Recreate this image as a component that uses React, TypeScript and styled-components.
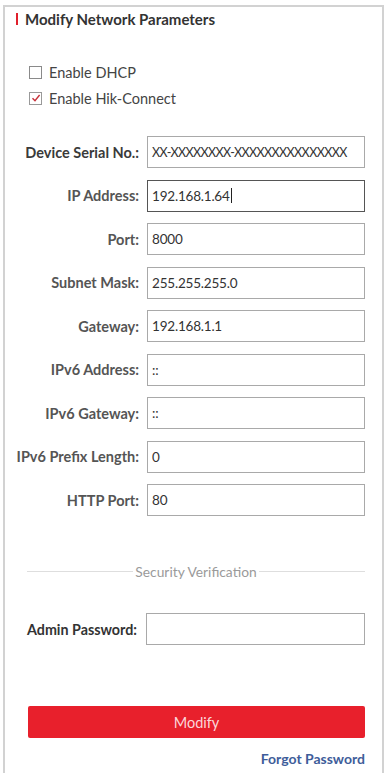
import styled, { createGlobalStyle } from "styled-components";

const GlobalStyle = createGlobalStyle`
  html, body {
    margin: 0;
    padding: 0;
    background: #ffffff;
    font-family: Lato, "Open Sans", "Liberation Sans", sans-serif;
  }
`;

type Row = { label: string; value: string; strong?: boolean; focused?: boolean; tight?: boolean };

const rows: Row[] = [
  { label: "Device Serial No.:", value: "XX-XXXXXXXX-XXXXXXXXXXXXXXX", strong: true, tight: true },
  { label: "IP Address:", value: "192.168.1.64", focused: true },
  { label: "Port:", value: "8000" },
  { label: "Subnet Mask:", value: "255.255.255.0" },
  { label: "Gateway:", value: "192.168.1.1" },
  { label: "IPv6 Address:", value: "::" },
  { label: "IPv6 Gateway:", value: "::" },
  { label: "IPv6 Prefix Length:", value: "0" },
  { label: "HTTP Port:", value: "80" },
];

const App = () => {
  return (
    <>
      <GlobalStyle />
      <Frame>
        <Title>Modify Network Parameters</Title>

        <Checks>
          <CheckRow>
            <Box />
            <span>Enable DHCP</span>
          </CheckRow>
          <CheckRow>
            <Box checked>
              <svg width="10" height="10" viewBox="0 0 10 10">
                <path d="M1.5 5.2 L4 7.8 L8.6 2" fill="none" stroke="#c8303a" strokeWidth="1.4" />
              </svg>
            </Box>
            <span>Enable Hik-Connect</span>
          </CheckRow>
        </Checks>

        <Form>
          {rows.map((r) => (
            <FieldRow key={r.label}>
              <Label strong={r.strong}>{r.label}</Label>
              <Field focused={r.focused}>
                <Value tight={r.tight}>{r.value}</Value>
                {r.focused && <Caret />}
              </Field>
            </FieldRow>
          ))}
        </Form>

        <Divider>
          <span>Security Verification</span>
        </Divider>

        <AdminRow>
          <AdminLabel>Admin Password:</AdminLabel>
          <Field />
        </AdminRow>

        <Actions>
          <ModifyButton>Modify</ModifyButton>
          <Forgot>Forgot Password</Forgot>
        </Actions>
      </Frame>
    </>
  );
};

const Frame = styled.div`
  margin: 5px 3px 0 3px;
  border: 2px solid #d2d2d2;
  border-bottom: none;
  height: 780px;
  box-sizing: border-box;
  padding: 0 17px 0 0;
`;

const Title = styled.div`
  display: flex;
  align-items: center;
  gap: 7px;
  margin: 4px 0 0 11px;
  height: 16px;
  font-size: 15px;
  font-weight: 700;
  color: #333;

  &::before {
    content: "";
    width: 2px;
    height: 12px;
    background: #e0202c;
  }
`;

const Checks = styled.div`
  display: flex;
  flex-direction: column;
  gap: 10px;
  margin: 37px 0 0 24px;
`;

const CheckRow = styled.div`
  display: flex;
  align-items: center;
  gap: 7px;
  height: 16px;
  font-size: 14.5px;
  color: #444;
`;

const Box = styled.div<{ checked?: boolean }>`
  width: 11px;
  height: 11px;
  border: 1px solid ${(p) => (p.checked ? "#999" : "#8a8a8a")};
  display: flex;
  align-items: center;
  justify-content: center;
`;

const Form = styled.div`
  display: flex;
  flex-direction: column;
  gap: 11.5px;
  margin-top: 30px;
`;

const FieldRow = styled.div`
  display: grid;
  grid-template-columns: 134px 1fr;
  column-gap: 8px;
  align-items: center;
`;

const Label = styled.div<{ strong?: boolean }>`
  text-align: right;
  font-size: 14.5px;
  font-weight: 700;
  color: ${(p) => (p.strong ? "#3a3a3a" : "#555")};
  white-space: nowrap;
`;

const Field = styled.div<{ focused?: boolean }>`
  height: 32px;
  box-sizing: border-box;
  border: 1px solid ${(p) => (p.focused ? "#555" : "#a9a9a9")};
  padding: 0 4px;
  display: flex;
  align-items: center;
  font-size: 13.5px;
  color: #333;
  overflow: hidden;
  white-space: nowrap;
`;

const Value = styled.span<{ tight?: boolean }>`
  font-size: ${(p) => (p.tight ? "12.5px" : "inherit")};
  letter-spacing: ${(p) => (p.tight ? "-0.6px" : "-0.2px")};
`;

const Caret = styled.span`
  flex: none;
  width: 1px;
  height: 15px;
  background: #222;
  margin-left: 1px;
`;

const Divider = styled.div`
  display: flex;
  align-items: center;
  gap: 2px;
  margin: 47px 0 0 22px;
  font-size: 13.8px;
  color: #9a9a9a;

  &::before,
  &::after {
    content: "";
    flex: 1;
    height: 1px;
    background: #dedede;
  }
`;

const AdminRow = styled.div`
  display: grid;
  grid-template-columns: 117px 1fr;
  column-gap: 2px;
  align-items: center;
  margin: 33px 0 0 22px;
`;

const AdminLabel = styled.div`
  font-size: 14.3px;
  font-weight: 700;
  color: #333;
  white-space: nowrap;
`;

const Actions = styled.div`
  display: flex;
  flex-direction: column;
  align-items: flex-end;
  margin: 61px 0 0 23px;
`;

const ModifyButton = styled.div`
  width: 100%;
  height: 32px;
  border-radius: 2px;
  background: #e8202c;
  color: #fbd7da;
  font-size: 14.5px;
  display: flex;
  align-items: center;
  justify-content: center;
`;

const Forgot = styled.div`
  margin-top: 12px;
  font-size: 14px;
  font-weight: 700;
  color: #3e5d9a;
`;

export default App;
